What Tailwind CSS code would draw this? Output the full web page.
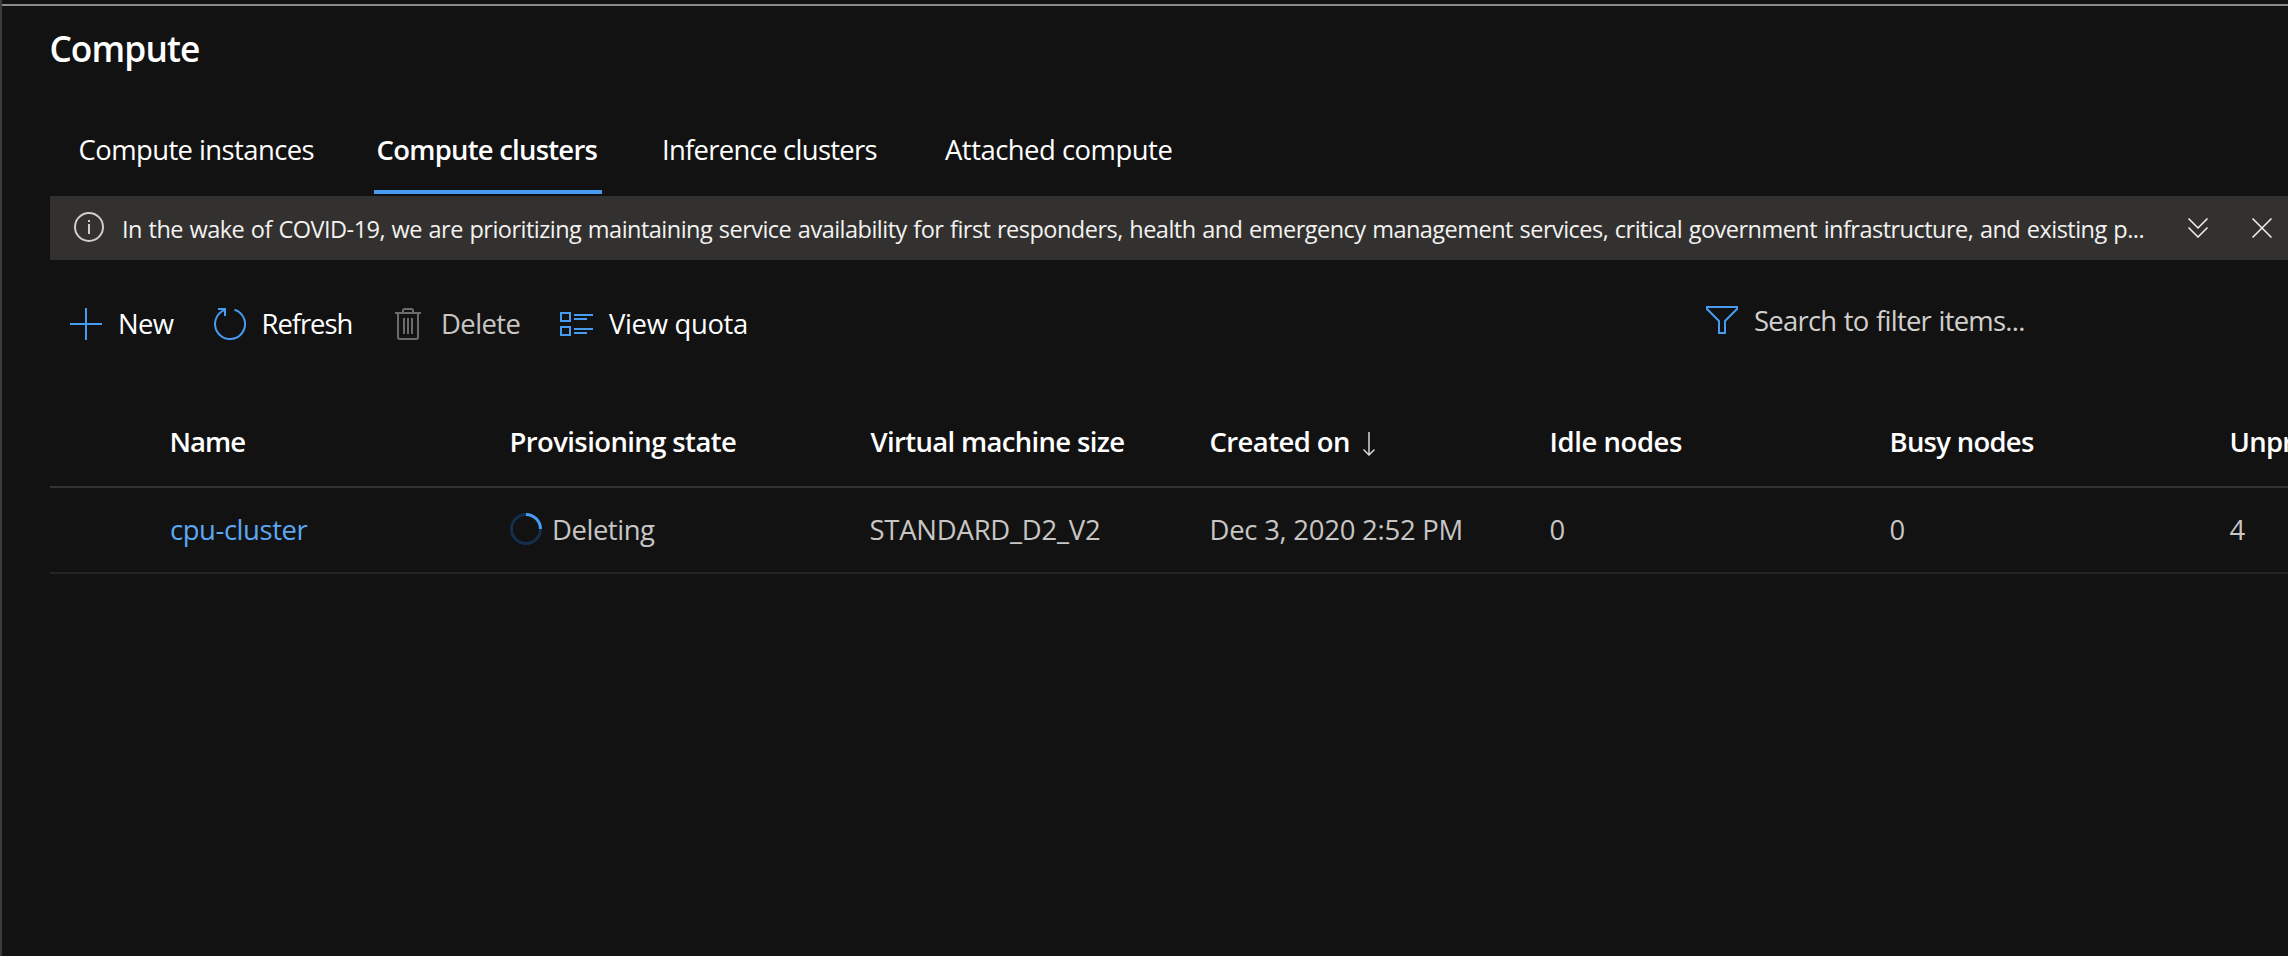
<!DOCTYPE html>
<html lang="en">
<head>
<meta charset="utf-8">
<title>Compute</title>
<script src="https://cdn.jsdelivr.net/npm/@tailwindcss/browser@4"></script>
</head>
<body class="h-[956px] w-[2288px] overflow-hidden bg-[#121212] font-['Open_Sans',sans-serif] text-[27.44px] leading-[37px] whitespace-nowrap text-white">
<div class="flex h-full flex-col overflow-hidden border-l-2 border-[#3b3b3b]">
  <div class="mt-1 h-0.5 shrink-0 bg-[#8a8a88]"></div>

  <h1 class="mt-[18px] ml-[47.4px] text-[35.28px] leading-[48px] font-semibold tracking-[-0.871px]">Compute</h1>

  <!-- Tabs -->
  <nav class="mt-[33px] ml-[76.5px] flex h-[89px] shrink-0">
    <a class="w-[295.5px] pt-[26px] tracking-[-0.58px]">Compute instances</a>
    <a class="w-[228px] border-b-4 border-[#479bf0] pt-[26px] pl-[2.6px] font-semibold tracking-[-0.752px]">Compute clusters</a>
    <a class="ml-[60px] w-[283px] pt-[26px] tracking-[-0.713px]">Inference clusters</a>
    <a class="pt-[26px] tracking-[-0.5px]">Attached compute</a>
  </nav>

  <!-- Notice -->
  <div class="mt-0.5 ml-12 flex h-16 shrink-0 bg-[#323130] text-[23.52px] leading-8 text-[#f3f2f1]">
    <svg class="mt-4 ml-6 size-[30px] shrink-0" viewBox="0 0 30 30" fill="none" stroke="#d0cecc" stroke-width="2"><circle cx="15" cy="15" r="14"/><path d="M15 8v2M15 12v10"/></svg>
    <p class="ml-[18px] w-[2066px] shrink-0 pt-[17px] tracking-[-0.525px] [word-spacing:1px]">In the wake of COVID-19, we are prioritizing maintaining service availability for first responders, health and emergency management services, critical government infrastructure, and existing p...</p>
    <svg class="mt-[22px] h-5 w-5 shrink-0" viewBox="0 0 20 20" fill="none" stroke="#f3f2f1" stroke-width="1.5"><path d="M.5.5 10 10 19.5.5M.5 9.5 10 19 19.5 9.5"/></svg>
    <svg class="mt-[22px] ml-11 h-5 w-5 shrink-0" viewBox="0 0 20 20" fill="none" stroke="#f3f2f1" stroke-width="1.5"><path d="M.5.5l19 19M19.5.5l-19 19"/></svg>
  </div>

  <!-- Command bar -->
  <div class="mt-[42px] ml-[68px] flex h-[66px] shrink-0 items-start">
    <div class="flex w-36 shrink-0 gap-4">
      <svg class="mt-1.5 size-8" viewBox="0 0 32 32" fill="none" stroke="#479bf0" stroke-width="2"><path d="M16 0v32M0 16h32"/></svg>
      <span class="pt-[3px] tracking-[-0.7px]">New</span>
    </div>
    <div class="flex w-[178px] shrink-0 gap-[15.5px]">
      <svg class="mt-1.5 size-8" viewBox="0 0 32 32" fill="none" stroke="#479bf0" stroke-width="2"><path d="M20.5 1.7A15 15 0 1 1 11 1.9M4 1h7v7"/></svg>
      <span class="pt-[3px] tracking-[-1.045px]">Refresh</span>
    </div>
    <div class="flex w-[168px] shrink-0 gap-[17px] text-[#c8c6c4]">
      <svg class="mt-1.5 size-8" viewBox="0 0 32 32" fill="none" stroke="#6b6b6b" stroke-width="2"><path d="M3 5h26M11 5V2.5Q11 1 12.500 1h7Q21 1 21 2.500V5M6 5v24q0 2 2 2h16q2 0 2-2V5M12 10v16M16 10v16M20 10v16"/></svg>
      <span class="pt-[3px] tracking-[-0.586px]">Delete</span>
    </div>
    <div class="flex w-[1146px] shrink-0 gap-4">
      <svg class="mt-2.5 h-6 w-[33px]" viewBox="0 0 33 24" fill="none" stroke="#479bf0" stroke-width="2"><path d="M1 1h9v8H1zM1 15h9v8H1zM14 3h19M14 7h13M14 17h19M14 21h13"/></svg>
      <span class="pt-[3px] tracking-[-0.331px]">View quota</span>
    </div>
    <div class="flex shrink-0 gap-4 text-[#d2d0ce]">
      <svg class="mt-1 h-7 w-8" viewBox="0 0 32 28" fill="none" stroke="#479bf0" stroke-width="2"><path d="M1 1h30v2L19 15v12h-6V15L1 3z"/></svg>
      <span class="tracking-[-0.74px] [word-spacing:1px]">Search to filter items...</span>
    </div>
  </div>

  <!-- Clusters table -->
  <div class="mt-[30px] ml-12 grid h-[90px] shrink-0 grid-cols-[340px_361px_339px_341px_340px_340px_340px] overflow-hidden border-b-2 border-[#333] pt-[25px] pl-[119.5px] font-semibold">
    <span class="tracking-[-0.95px]">Name</span>
    <span class="tracking-[-0.579px]">Provisioning state</span>
    <span class="tracking-[-0.64px]">Virtual machine size</span>
    <span class="flex tracking-[-0.564px]"><span class="w-[153.5px]">Created on</span><svg class="mt-[9px] h-6 w-3" viewBox="0 0 12 24" fill="none" stroke="#d8d6d4" stroke-width="1.5"><path d="M6 0v23M.5 17.500l5.500 5.500 5.500-5.500"/></svg></span>
    <span class="-ml-px tracking-[-0.401px]">Idle nodes</span>
    <span class="-ml-px tracking-[-0.7px]">Busy nodes</span>
    <span class="-ml-px tracking-[-0.7px]">Unprovisioned nodes</span>
  </div>
  <div class="ml-12 grid h-[86px] shrink-0 grid-cols-[340px_361px_339px_341px_340px_340px_340px] overflow-hidden border-b-2 border-[#242424] pt-[23px] pl-[119.5px] text-[#c8c6c4]">
    <a class="ml-[0.5px] tracking-[-0.424px] text-[#5ba7f3]">cpu-cluster</a>
    <span class="flex gap-2.5 tracking-[-0.454px]"><svg class="mt-0.5 ml-[0.5px] size-8" viewBox="0 0 32 32" fill="none" stroke-width="3"><circle cx="16" cy="16" r="14.500" stroke="#142f4b"/><path d="M16 1.500A14.500 14.500 0 0 1 30.500 16" stroke="#479bf0"/></svg>Deleting</span>
    <span class="-ml-px tracking-[-0.212px]">STANDARD_D2_V2</span>
    <span class="tracking-[-0.238px]">Dec 3, 2020 2:52 PM</span>
    <span class="-ml-px">0</span>
    <span class="-ml-px">0</span>
    <span class="-ml-px">4</span>
  </div>
</div>
</body>
</html>
